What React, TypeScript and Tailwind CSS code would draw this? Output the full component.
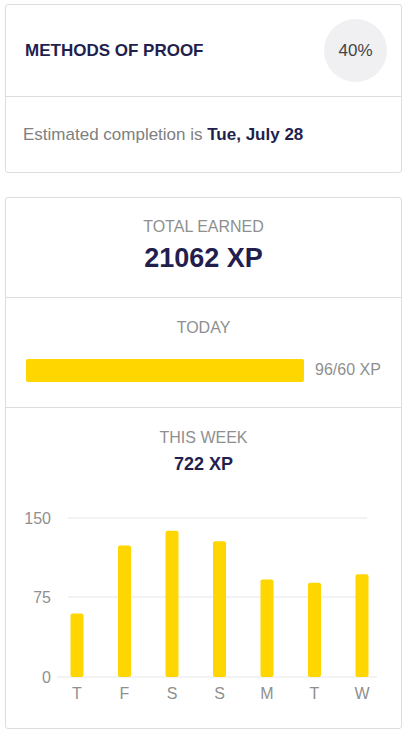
import React from 'react';

const week = [
  { day: 'T', xp: 60 },
  { day: 'F', xp: 124 },
  { day: 'S', xp: 138 },
  { day: 'S', xp: 128 },
  { day: 'M', xp: 92 },
  { day: 'T', xp: 89 },
  { day: 'W', xp: 97 },
];

function WeekChart() {
  // svg coordinates: x relative to card inner edge, y relative to chart top
  const base = 176;
  const scale = 159 / 150;
  return (
    <svg width="393" height="210" viewBox="0 0 393 210" className="block">
      <line x1="62" x2="361" y1={base - 159} y2={base - 159} stroke="#e6e6e6" strokeWidth="1" />
      <line x1="62" x2="361" y1={base - 80} y2={base - 80} stroke="#e6e6e6" strokeWidth="1" />
      <line x1="51" x2="371" y1={base} y2={base} stroke="#e6e6e6" strokeWidth="1" />
      <g fill="#8f8f8f" fontSize="16" fontFamily="Liberation Sans, Arial, sans-serif" textAnchor="end">
        <text x="45" y={base - 159 + 6}>150</text>
        <text x="45" y={base - 80 + 6}>75</text>
        <text x="45" y={base + 6}>0</text>
      </g>
      {week.map((d, i) => {
        const cx = 71 + i * 47.5;
        const h = d.xp * scale;
        return (
          <g key={i}>
            <rect x={cx - 6.5} y={base - h} width="13" height={h} rx="2" fill="#ffd600" />
            <text
              x={cx}
              y={base + 22}
              fill="#8f8f8f"
              fontSize="16"
              fontFamily="Liberation Sans, Arial, sans-serif"
              textAnchor="middle"
            >
              {d.day}
            </text>
          </g>
        );
      })}
    </svg>
  );
}

export default function App() {
  return (
    <div className="min-h-[734px] bg-white pt-[4px] px-[5px] font-['Liberation_Sans',Arial,sans-serif]">
      <div className="border border-[#dddddd] rounded-[3px]">
        <div className="flex items-center justify-between h-[92px] pl-[19px] pr-[14px] border-b border-[#dddddd]">
          <h5 className="text-[17px] font-bold text-[#221f4f]">METHODS OF PROOF</h5>
          <div className="w-[63px] h-[63px] rounded-full bg-[#f0f0f2] flex items-center justify-center text-[17px] text-[#444444]">
            40%
          </div>
        </div>
        <div className="h-[75px] flex items-center pl-[17px] text-[17px] text-[#808080]">
          <span>
            Estimated completion is <strong className="text-[#221f4f]">Tue, July 28</strong>
          </span>
        </div>
      </div>

      <div className="mt-[24px] border border-[#dddddd] rounded-[3px]">
        <div className="h-[100px] flex flex-col items-center pt-[20px] border-b border-[#dddddd]">
          <div className="text-[16px] text-[#8f8f8f] leading-[18px]">TOTAL EARNED</div>
          <div className="mt-[7px] text-[27px] font-bold text-[#221f4f] leading-[30px]">21062 XP</div>
        </div>
        <div className="h-[110px] flex flex-col border-b border-[#dddddd]">
          <div className="mt-[21px] text-center text-[16px] text-[#8f8f8f] leading-[18px]">TODAY</div>
          <div className="mt-[21px] flex items-center pl-[20px]">
            <div className="w-[278px] h-[23px] rounded-[2px] bg-[#ffd600]" />
            <span className="ml-[11px] text-[16px] text-[#8f8f8f]">96/60 XP</span>
          </div>
        </div>
        <div className="h-[320px] flex flex-col items-center">
          <div className="mt-[21px] text-[16px] text-[#8f8f8f] leading-[18px]">THIS WEEK</div>
          <div className="mt-[7px] text-[18px] font-bold text-[#221f4f] leading-[20px]">722 XP</div>
          <div className="mt-[27px] self-stretch">
            <WeekChart />
          </div>
        </div>
      </div>
    </div>
  );
}
